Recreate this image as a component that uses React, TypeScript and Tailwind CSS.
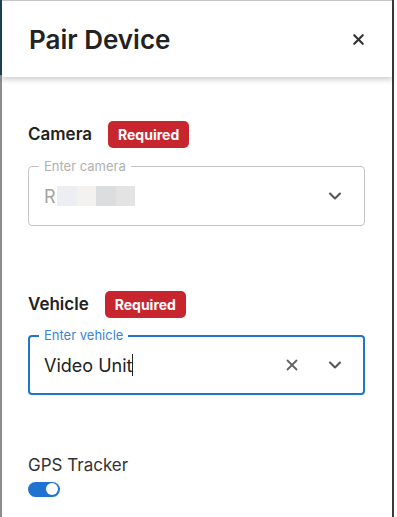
import { ChevronDown, X } from "lucide-react";

function Badge() {
  return (
    <span className="flex h-[27px] items-center rounded-[5px] bg-[#c8262f] px-[10px] text-[14px] font-bold text-white">
      Required
    </span>
  );
}

export default function App() {
  return (
    <div className="flex h-[517px] w-[397px] bg-white font-['Inter',sans-serif] text-[#222]">
      <div className="flex w-[2px] flex-col">
        <div className="h-[75px] bg-[#1d4457]" />
        <div className="flex-1 bg-[#8c8c8c]" />
      </div>

      <div className="flex flex-1 flex-col border-t border-[#c9c9c9]">
        <header className="z-10 flex h-[76px] items-center justify-between pl-[27px] pr-[25px] shadow-[0_3px_5px_rgba(0,0,0,0.18)]">
          <h1 className="text-[26px] font-semibold text-[#222]">Pair Device</h1>
          <X className="size-[17px] text-[#333]" strokeWidth={3} />
        </header>

        <div className="flex flex-col pl-[26px] pr-[27px] pt-[44px]">
          <div className="flex items-center gap-[16px]">
            <span className="text-[17px] font-semibold">Camera</span>
            <Badge />
          </div>

          <div className="relative mt-[18px] flex h-[60px] items-center rounded-[4px] border border-[#c4c4c4] pl-[15px] pr-[19px]">
            <span className="absolute -top-[9px] left-[10px] bg-white px-[5px] text-[13px] leading-4 text-[#b0b0b0]">
              Enter camera
            </span>
            <span className="text-[18px] text-[#a3a3a3]">R</span>
            <div className="ml-px flex h-[20px]">
              <span className="w-[20px] bg-[#eceef1]" />
              <span className="w-[19px] bg-[#f3f2ee]" />
              <span className="w-[20px] bg-[#dcdddf]" />
              <span className="w-[19px] bg-[#e3e3e3]" />
            </div>
            <ChevronDown className="ml-auto size-[20px] text-[#555]" strokeWidth={2.5} />
          </div>

          <div className="mt-[65px] flex items-center gap-[16px]">
            <span className="text-[17px] font-semibold">Vehicle</span>
            <Badge />
          </div>

          <div className="relative mt-[17px] flex h-[60px] items-center rounded-[4px] border-2 border-[#1f74d0] pl-[14px] pr-[18px]">
            <span className="absolute -top-[10px] left-[9px] bg-white px-[5px] text-[13px] leading-4 text-[#3a86d6]">
              Enter vehicle
            </span>
            <span className="text-[18px] text-[#222]">Video Unit</span>
            <span className="h-[22px] w-px bg-[#222]" />
            <X className="ml-auto size-[18px] text-[#666]" strokeWidth={2.5} />
            <ChevronDown className="ml-[24px] size-[20px] text-[#555]" strokeWidth={2.5} />
          </div>

          <span className="mt-[58px] text-[17px] text-[#333]">GPS Tracker</span>

          <div className="mt-[3px] flex h-[15px] w-[32px] items-center justify-end rounded-full bg-[#1f74d0] pr-[2px]">
            <span className="size-[12px] rounded-full bg-white" />
          </div>
        </div>
      </div>

      <div className="w-[2px] bg-[#3a3a3a]" />
      <div className="w-[3px]" />
    </div>
  );
}
